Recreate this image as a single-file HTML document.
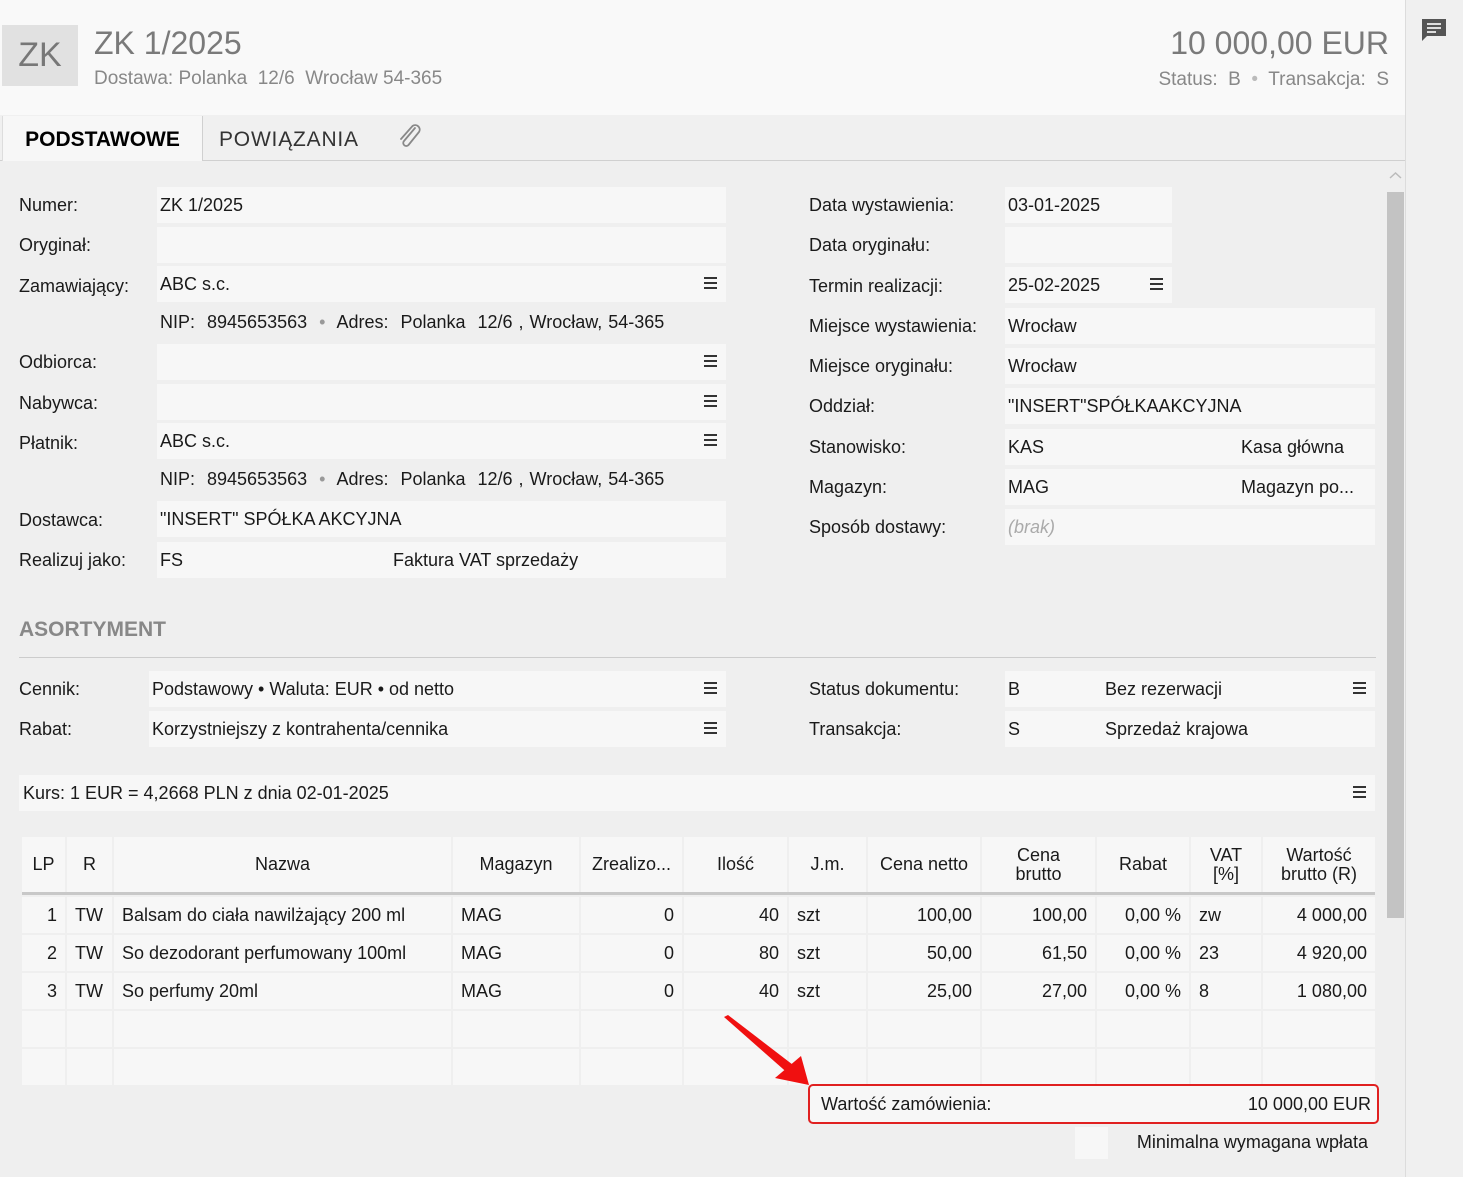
<!DOCTYPE html>
<html><head><meta charset="utf-8"><style>
*{margin:0;padding:0;box-sizing:border-box}
body{width:1463px;height:1177px;overflow:hidden;background:#efefef;font-family:"Segoe UI","Liberation Sans",sans-serif;font-size:18px;color:#1a1a1a;position:relative}
.a{position:absolute;white-space:nowrap}
.lbl{position:absolute;white-space:nowrap;line-height:20px}
.f{position:absolute;background:#f7f7f7;height:36px;line-height:36px;padding-left:3px;white-space:nowrap}
.hb{position:absolute;right:9px;top:11px;width:13px;height:12px;border-top:2px solid #333;border-bottom:2px solid #333}
.hb:after{content:"";position:absolute;left:0;right:0;top:3px;height:2px;background:#333}
.grid{position:absolute;left:22px;display:grid;grid-template-columns:43px 45px 337px 126px 101px 103px 77px 112px 113px 92px 70px 112px;column-gap:2px}
.grid div{background:#f7f7f7;white-space:nowrap;overflow:hidden;padding:0 8px}
.hd div{height:55px;display:flex;align-items:center;justify-content:center;text-align:center;line-height:19px}
.rw div{height:36px;line-height:36px}
.r{text-align:right}
</style></head><body>
<div class="a" style="left:0;top:0;width:1405px;height:115px;background:#f9f9f9"></div>
<div class="a" style="left:2px;top:25px;width:76px;height:61px;background:#e1e1e1;color:#777;font-size:34px;line-height:61px;text-align:center">ZK</div>
<div class="a" style="left:94px;top:22px;font-size:32px;color:#7a7a7a;line-height:42px">ZK 1/2025</div>
<div class="a" style="left:94px;top:68px;font-size:19px;color:#888;line-height:22px">Dostawa: Polanka&nbsp; 12/6&nbsp; Wrocław 54-365</div>
<div class="a" style="right:74px;top:22px;font-size:32px;color:#7a7a7a;line-height:42px">10 000,00 EUR</div>
<div class="a" style="right:74px;top:69px;font-size:19px;color:#888;line-height:22px">Status:&nbsp; B &nbsp;<span style="color:#bbb">•</span>&nbsp; Transakcja:&nbsp; S</div>
<div class="a" style="left:0;top:115px;width:1405px;height:46px;background:#f0f0f0;border-bottom:1px solid #d0d0d0"></div>
<div class="a" style="left:2px;top:116px;width:201px;height:45px;background:#f7f7f7;border-left:1px solid #ddd;border-right:1px solid #d0d0d0;font-weight:bold;font-size:21px;line-height:48px;text-align:center;color:#000">PODSTAWOWE</div>
<div class="a" style="left:219px;top:116px;font-size:21px;line-height:48px;color:#333;letter-spacing:.8px">POWIĄZANIA</div>
<svg class="a" style="left:396px;top:122px" width="28" height="28" viewBox="0 0 28 28"><path d="M19 6 L8 19 a3 3 0 0 0 4.5 4 L23 10 a4.5 4.5 0 0 0 -6.5 -6 L5 17" fill="none" stroke="#888" stroke-width="1.8" stroke-linecap="round"/></svg>
<div class="a" style="left:1405px;top:0;width:58px;height:1177px;background:#f0f0f0;border-left:1px solid #dcdcdc"></div>
<svg class="a" style="left:1419px;top:16px" width="30" height="28" viewBox="0 0 30 28"><path d="M3 3 h24 v17 h-19 l-5 5z" fill="#555"/><rect x="8" y="7" width="14" height="2" fill="#ddd"/><rect x="8" y="11" width="14" height="2" fill="#ddd"/><rect x="8" y="15" width="9" height="2" fill="#ddd"/></svg>
<div class="a" style="left:1386px;top:161px;width:19px;height:1016px;background:#efefef"></div>
<svg class="a" style="left:1388px;top:170px" width="15" height="10"><path d="M2 8 L7.5 3 L13 8" fill="none" stroke="#bbb" stroke-width="1.5"/></svg>
<div class="a" style="left:1387px;top:192px;width:17px;height:726px;background:#c3c3c3"></div>

<div class="lbl" style="left:19px;top:195px">Numer:</div><div class="f" style="left:157px;top:187px;width:569px">ZK 1/2025</div>
<div class="lbl" style="left:19px;top:235px">Oryginał:</div><div class="f" style="left:157px;top:227px;width:569px"></div>
<div class="lbl" style="left:19px;top:276px">Zamawiający:</div><div class="f" style="left:157px;top:266px;width:569px">ABC s.c.<span class="hb"></span></div>
<div class="a" style="left:160px;top:312px;word-spacing:1px">NIP:&nbsp; 8945653563 &nbsp;<span style="color:#999">•</span>&nbsp; Adres:&nbsp; Polanka&nbsp; 12/6 , Wrocław, 54-365</div>
<div class="lbl" style="left:19px;top:352px">Odbiorca:</div><div class="f" style="left:157px;top:344px;width:569px"><span class="hb"></span></div>
<div class="lbl" style="left:19px;top:393px">Nabywca:</div><div class="f" style="left:157px;top:384px;width:569px"><span class="hb"></span></div>
<div class="lbl" style="left:19px;top:433px">Płatnik:</div><div class="f" style="left:157px;top:423px;width:569px">ABC s.c.<span class="hb"></span></div>
<div class="a" style="left:160px;top:469px;word-spacing:1px">NIP:&nbsp; 8945653563 &nbsp;<span style="color:#999">•</span>&nbsp; Adres:&nbsp; Polanka&nbsp; 12/6 , Wrocław, 54-365</div>
<div class="lbl" style="left:19px;top:510px">Dostawca:</div><div class="f" style="left:157px;top:501px;width:569px">"INSERT" SPÓŁKA AKCYJNA</div>
<div class="lbl" style="left:19px;top:550px">Realizuj jako:</div><div class="f" style="left:157px;top:542px;width:569px">FS<span class="a" style="left:236px">Faktura VAT sprzedaży</span></div>

<div class="lbl" style="left:809px;top:195px">Data wystawienia:</div><div class="f" style="left:1005px;top:187px;width:167px">03-01-2025</div>
<div class="lbl" style="left:809px;top:235px">Data oryginału:</div><div class="f" style="left:1005px;top:227px;width:167px"></div>
<div class="lbl" style="left:809px;top:276px">Termin realizacji:</div><div class="f" style="left:1005px;top:267px;width:167px">25-02-2025<span class="hb"></span></div>
<div class="lbl" style="left:809px;top:316px">Miejsce wystawienia:</div><div class="f" style="left:1005px;top:308px;width:370px">Wrocław</div>
<div class="lbl" style="left:809px;top:356px">Miejsce oryginału:</div><div class="f" style="left:1005px;top:348px;width:370px">Wrocław</div>
<div class="lbl" style="left:809px;top:396px">Oddział:</div><div class="f" style="left:1005px;top:388px;width:370px">"INSERT"SPÓŁKAAKCYJNA</div>
<div class="lbl" style="left:809px;top:437px">Stanowisko:</div><div class="f" style="left:1005px;top:429px;width:370px">KAS<span class="a" style="left:236px">Kasa główna</span></div>
<div class="lbl" style="left:809px;top:477px">Magazyn:</div><div class="f" style="left:1005px;top:469px;width:370px">MAG<span class="a" style="left:236px">Magazyn po...</span></div>
<div class="lbl" style="left:809px;top:517px">Sposób dostawy:</div><div class="f" style="left:1005px;top:509px;width:370px;color:#aaa;font-style:italic">(brak)</div>

<div class="a" style="left:19px;top:618px;font-size:21px;font-weight:bold;color:#888">ASORTYMENT</div>
<div class="a" style="left:19px;top:657px;width:1357px;height:1px;background:#ccc"></div>
<div class="lbl" style="left:19px;top:679px">Cennik:</div><div class="f" style="left:149px;top:671px;width:577px">Podstawowy • Waluta: EUR • od netto<span class="hb"></span></div>
<div class="lbl" style="left:19px;top:719px">Rabat:</div><div class="f" style="left:149px;top:711px;width:577px">Korzystniejszy z kontrahenta/cennika<span class="hb"></span></div>
<div class="lbl" style="left:809px;top:679px">Status dokumentu:</div><div class="f" style="left:1005px;top:671px;width:370px">B<span class="a" style="left:100px">Bez rezerwacji</span><span class="hb"></span></div>
<div class="lbl" style="left:809px;top:719px">Transakcja:</div><div class="f" style="left:1005px;top:711px;width:370px">S<span class="a" style="left:100px">Sprzedaż krajowa</span></div>
<div class="f" style="left:19px;top:775px;width:1356px;padding-left:4px">Kurs: 1 EUR = 4,2668 PLN z dnia 02-01-2025<span class="hb"></span></div>

<div class="grid hd" style="top:837px">
<div>LP</div><div>R</div><div>Nazwa</div><div>Magazyn</div><div>Zrealizo...</div><div>Ilość</div><div>J.m.</div><div>Cena netto</div><div>Cena<br>brutto</div><div>Rabat</div><div>VAT<br>[%]</div><div>Wartość<br>brutto (R)</div>
</div>
<div class="a" style="left:22px;top:892px;width:1353px;height:3px;background:#c8c8c8"></div>
<div class="grid rw" style="top:897px;row-gap:2px">
<div class="r">1</div><div>TW</div><div>Balsam do ciała nawilżający 200 ml</div><div>MAG</div><div class="r">0</div><div class="r">40</div><div>szt</div><div class="r">100,00</div><div class="r">100,00</div><div class="r">0,00 %</div><div>zw</div><div class="r">4 000,00</div>
<div class="r">2</div><div>TW</div><div>So dezodorant perfumowany 100ml</div><div>MAG</div><div class="r">0</div><div class="r">80</div><div>szt</div><div class="r">50,00</div><div class="r">61,50</div><div class="r">0,00 %</div><div>23</div><div class="r">4 920,00</div>
<div class="r">3</div><div>TW</div><div>So perfumy 20ml</div><div>MAG</div><div class="r">0</div><div class="r">40</div><div>szt</div><div class="r">25,00</div><div class="r">27,00</div><div class="r">0,00 %</div><div>8</div><div class="r">1 080,00</div>
<div></div><div></div><div></div><div></div><div></div><div></div><div></div><div></div><div></div><div></div><div></div><div></div>
<div></div><div></div><div></div><div></div><div></div><div></div><div></div><div></div><div></div><div></div><div></div><div></div>
</div>

<div class="a" style="left:808px;top:1084px;width:571px;height:40px;border:2px solid #e02020;border-radius:5px;background:#f7f7f7;line-height:36px;padding:0 6px 0 11px">Wartość zamówienia:<span style="position:absolute;right:6px">10 000,00 EUR</span></div>
<svg class="a" style="left:715px;top:1010px" width="100" height="80"><path d="M9 7 L13 5 L82 58 L76 66 Z" fill="#f01010"/><path d="M94 75 L60 68 L86 46 Z" fill="#f01010"/></svg>
<div class="a" style="left:1075px;top:1127px;width:33px;height:32px;background:#f7f7f7"></div>
<div class="a" style="right:95px;top:1131px;line-height:22px">Minimalna wymagana wpłata</div>
</body></html>
